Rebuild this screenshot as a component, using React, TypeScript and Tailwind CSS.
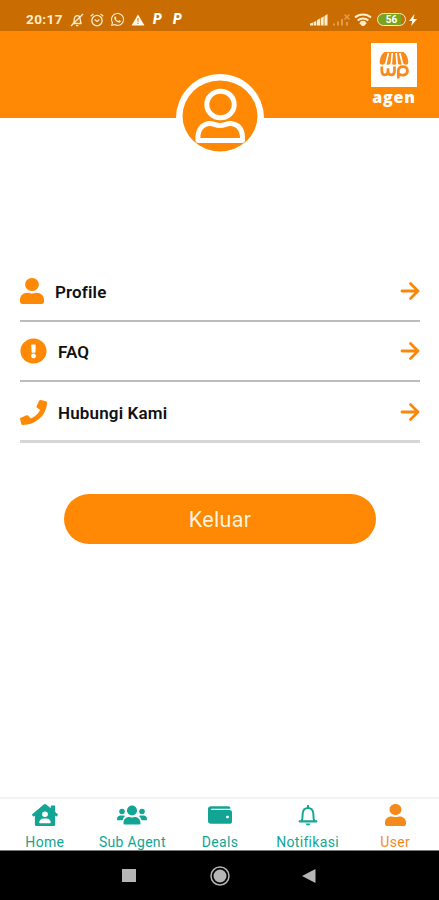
import type { ReactNode } from "react";
import { FaExclamationCircle, FaHouseUser, FaPhone, FaUser, FaWallet, FaWhatsapp } from "react-icons/fa";

type tMenuItem = { label: string; icon: ReactNode; line: string };
type tNavItem = { label: string; icon: ReactNode; active?: boolean };

const GroupIcon: React.FC = () => (
    <svg viewBox="0 0 30 22" className="h-[22px] w-[30px]" fill="currentColor">
        <circle cx="15" cy="6.500" r="5" />
        <circle cx="5" cy="7.500" r="2.800" />
        <circle cx="25" cy="7.500" r="2.800" />
        <path d="M7.500 20.500c-.8 0-1-.4-1-1.200 0-4 2.500-6.300 5.500-6.300 1 0 1.500.6 3 .6s2-.6 3-.6c3 0 5.500 2.300 5.500 6.300 0 .8-.2 1.200-1 1.200z" />
        <path d="M.8 16.200c-.7 0-.8-.3-.8-1 0-2.500 1.500-3.700 3.500-3.700h3c.7 0 1.400.3 1.800.6-1.500 1-2.400 2.400-2.700 4.100zM29.200 16.200c.7 0 .8-.3.8-1 0-2.500-1.500-3.700-3.500-3.700h-3c-.7 0-1.400.3-1.800.6 1.500 1 2.400 2.400 2.700 4.100z" />
    </svg>
);

const BellIcon: React.FC = () => (
    <svg viewBox="0 0 20 22" className="h-[22px] w-5" fill="none" stroke="currentColor" strokeWidth="1.900">
        <path
            d="M3.700 16.800c1.200-2.300.7-5 1-7.500.4-3.200 2.500-5.300 5.300-5.300s4.900 2.100 5.300 5.300c.3 2.500-.2 5.200 1 7.500"
            strokeLinecap="round"
        />
        <path d="M1.700 17.300h16.600" strokeWidth="2.200" strokeLinecap="round" />
        <path d="M10 1v3" strokeWidth="2" />
        <path d="M7.500 19.500h5c-.5 1.300-1.300 2-2.500 2s-2-.7-2.500-2z" fill="currentColor" stroke="none" />
    </svg>
);

const menuItems: tMenuItem[] = [
    {
        label: "Profile",
        icon: <FaUser preserveAspectRatio="none" className="h-[26px] w-6" />,
        line: "h-[60px] border-b-2 border-[#bcbcbc]",
    },
    {
        label: "FAQ",
        icon: <FaExclamationCircle preserveAspectRatio="none" className="h-[26px] w-[27px]" />,
        line: "h-[60px] border-b-2 border-[#bcbcbc]",
    },
    {
        label: "Hubungi Kami",
        icon: <FaPhone preserveAspectRatio="none" className="h-[25px] w-[27px]" />,
        line: "h-[61px] border-b-[3px] border-[#d6d6d6] pt-[2px]",
    },
];

const navItems: tNavItem[] = [
    { label: "Home", icon: <FaHouseUser preserveAspectRatio="none" className="h-[22px] w-[26px]" /> },
    { label: "Sub Agent", icon: <GroupIcon /> },
    { label: "Deals", icon: <FaWallet preserveAspectRatio="none" className="h-[20px] w-[24px]" /> },
    { label: "Notifikasi", icon: <BellIcon /> },
    { label: "User", icon: <FaUser preserveAspectRatio="none" className="h-[22px] w-[21px]" />, active: true },
];

const StatusBar: React.FC = () => (
    <div className="flex h-[31px] items-center justify-between bg-[#c96c02] pt-2 pr-[22px] pl-[26px] text-[#ffedcb]">
        <div className="flex items-center">
            <span className="w-[44px] text-[13.5px] font-bold tracking-[0.4px]">20:17</span>
            {/* muted bell */}
            <svg viewBox="0 0 14 14" className="h-[14px] w-[14px]" fill="none" stroke="currentColor" strokeWidth="1.3">
                <path d="M2.500 10.500h9M3.500 10.500c1-2 .5-3 .8-4.600C4.700 3.500 6 2.700 7.200 2.700c2 0 3 1.600 3 3.500 0 2 .3 3 1.200 4.300M6 12.600h2.400M1 13L13 1" />
            </svg>
            {/* alarm */}
            <svg viewBox="0 0 14 14" className="ml-[6px] h-[14px] w-[14px]" fill="none" stroke="currentColor" strokeWidth="1.3">
                <circle cx="7" cy="7.600" r="5.200" />
                <path d="M.7 3.200L3.400 1M13.300 3.200L10.600 1M4.600 6.500L7 8.500l2.400-2" />
            </svg>
            <FaWhatsapp className="ml-[6px] h-[15px] w-[15px]" />
            <svg viewBox="0 0 14 12" className="ml-[6px] h-3 w-[14px]">
                <path d="M7 .5L13.500 11.500H.5z" fill="#fff8e8" />
                <path d="M7 4v3.700M7 8.800v1.200" stroke="#d58b36" strokeWidth="1.200" />
            </svg>
            <span className="ml-[8px] w-[20px] text-[14px] font-black text-white italic">P</span>
            <span className="text-[14px] font-black text-white italic">P</span>
        </div>
        <div className="flex items-center">
            <svg viewBox="0 0 18 13" className="h-[13px] w-[18px]" fill="currentColor">
                <path d="M0 12.500v-2l3-1v3zM3.600 12.500V9l2.700-1v4.500zM7 12.500V7l3-1.500v7zM10.700 12.500V5l3-1.500v9zM14.400 12.500V3L17.500 1v11.500z" />
            </svg>
            <svg viewBox="0 0 18 13" className="ml-1 h-[13px] w-[18px] text-[#e29b51]" fill="currentColor">
                <path d="M1 12.500v-2h2v2zM5 12.500V8.500h2v4zM9 12.500V6h2v6.500zM14 12.500V9h2v3.500zM12 2l1-1 2 2 2-2 1 1-2 2 2 2-1 1-2-2-2 2-1-1 2-2z" />
            </svg>
            <svg viewBox="0 0 18 13" className="ml-1 h-[13px] w-[18px]" fill="none" stroke="currentColor" strokeWidth="2">
                <path d="M1 4.500c4.500-4 11.500-4 16 0M3.700 7.500c3-2.700 7.600-2.700 10.600 0M6.300 10c1.600-1.300 3.800-1.300 5.400 0" />
                <path d="M7.500 11l1.500 1.500L10.500 11z" />
            </svg>
            <div className="ml-[5px] flex h-[13px] w-[29px] items-center justify-center rounded-full border-[1.5px] border-[#ffe9c0] bg-gradient-to-r from-[#78a51c] from-85% to-[#c96c02] to-85% text-[10px] leading-none font-bold text-white">
                56
            </div>
            <svg viewBox="0 0 8 12" className="ml-[3px] h-3 w-2" fill="#fff8e8">
                <path d="M5.500 0L0 7h3.300L2.200 12 8 5H4.500z" />
            </svg>
        </div>
    </div>
);

const Logo: React.FC = () => (
    <div className="flex w-[48px] flex-col items-center">
        <div className="h-[44px] w-[46px] bg-white">
            <svg viewBox="0 0 46 44" className="h-full w-full" fill="none" stroke="#f98a1c">
                <path
                    d="M13.500 9h19c3 2 4.800 6 4.800 10.500 0 3-5 3-5.300 0 0 3-5.700 3-5.700 0 0 3-6.600 3-6.600 0 0 3-5.700 3-5.700 0 0 3-5.300 3-5.300 0C8.700 15 10.500 11 13.500 9z"
                    fill="#f98a1c"
                    stroke="none"
                />
                <path d="M17.500 10l-2.700 11M21.200 10l-.9 11M25.200 10l.9 11M28.800 10l2.700 11" stroke="#fff" strokeWidth="1.700" />
                <path
                    d="M10.800 23.500v4.300c0 5.500 6.200 5.500 6.200 0v-2.500 2.500c0 5.500 6.500 5.500 6.500 0v-4.300M27.300 35.500v-7.700c0-5.700 9.200-5.700 9.200 0 0 4.500-5.500 5.500-9 3"
                    strokeWidth="2.700"
                />
            </svg>
        </div>
        <span className="mt-[1px] font-['Open_Sans',sans-serif] text-[16px] leading-[18px] font-extrabold tracking-[0.8px] text-white">
            agen
        </span>
    </div>
);

const Avatar: React.FC = () => (
    <svg viewBox="0 0 88 88" className="absolute top-[43px] left-[176px] h-[88px] w-[88px]">
        <circle cx="44" cy="44" r="44" fill="#fff" />
        <ellipse cx="44" cy="42" rx="37.500" ry="35.500" fill="#ff8804" />
        <g fill="none" stroke="#fff" strokeWidth="5">
            <ellipse cx="44.500" cy="30.500" rx="13.700" ry="13.200" />
            <path
                d="M22 66.500c-.8-10 3.500-16 11-17 4-.5 6 2 11 2s7-2.500 11-2c8 1 12 7 11.500 17z"
                strokeLinejoin="round"
            />
        </g>
    </svg>
);

const MenuRow: React.FC<tMenuItem> = ({ label, icon, line }) => (
    <div className={`flex items-center justify-between ${line}`}>
        <div className="flex items-center gap-[11px]">
            <span className="text-[#ff8804]">{icon}</span>
            <span className="pt-[3px] text-[17px] font-semibold tracking-[0.15px] text-[#111]">{label}</span>
        </div>
        <svg
            viewBox="0 0 20 20"
            className="h-5 w-5"
            fill="none"
            stroke="#f7880c"
            strokeWidth="2.800"
            strokeLinecap="round"
            strokeLinejoin="round"
        >
            <path d="M2 10h16M10.500 2.500L18 10l-7.500 7.500" />
        </svg>
    </div>
);

const BottomNav: React.FC = () => (
    <nav className="grid h-[53px] grid-cols-5 border-t-2 border-[#f3f3f3] bg-white pl-px">
        {navItems.map((item) => (
            <div
                key={item.label}
                className={`flex flex-col items-center ${item.active ? "text-[#f58a1c]" : "text-[#12a594]"}`}
            >
                <div className="flex h-[34px] items-center pb-[2px]">{item.icon}</div>
                <span className="text-[14px] leading-[18px] tracking-[0.3px]">{item.label}</span>
            </div>
        ))}
    </nav>
);

const App: React.FC = () => {
    return (
        <div className="flex h-[900px] w-[439px] flex-col overflow-hidden bg-white font-[Roboto,sans-serif]">
            <StatusBar />
            <header className="relative flex h-[87px] justify-end bg-[#ff8804] pt-3 pr-[21px]">
                <Logo />
                <Avatar />
            </header>
            <main className="flex flex-1 flex-col pt-[144px]">
                <div className="mr-[19px] ml-[20px]">
                    {menuItems.map((item) => (
                        <MenuRow key={item.label} {...item} />
                    ))}
                </div>
                <button className="mt-[51px] mr-[63px] ml-[64px] h-[50px] rounded-full bg-[#ff8804] pt-[3px] text-[21.5px] tracking-[0.3px] text-[#fff3dc]">
                    Keluar
                </button>
            </main>
            <BottomNav />
            {/* android navigation */}
            <div className="grid h-[50px] grid-cols-5 items-center justify-items-center border-t border-[#777] bg-black">
                <span className="col-start-2 h-[13px] w-[14px] -translate-x-[3px] bg-[#b5b5b5]" />
                <svg viewBox="0 0 20 20" className="h-5 w-5 translate-x-px">
                    <circle cx="10" cy="10" r="9" fill="none" stroke="#b5b5b5" strokeWidth="1.500" />
                    <circle cx="10" cy="10" r="6.500" fill="#b5b5b5" />
                </svg>
                <svg viewBox="0 0 14 14" className="h-[14px] w-[14px] translate-x-[2px]">
                    <path d="M13.500 0v14L0 7z" fill="#b5b5b5" />
                </svg>
            </div>
        </div>
    );
};
export default App;
